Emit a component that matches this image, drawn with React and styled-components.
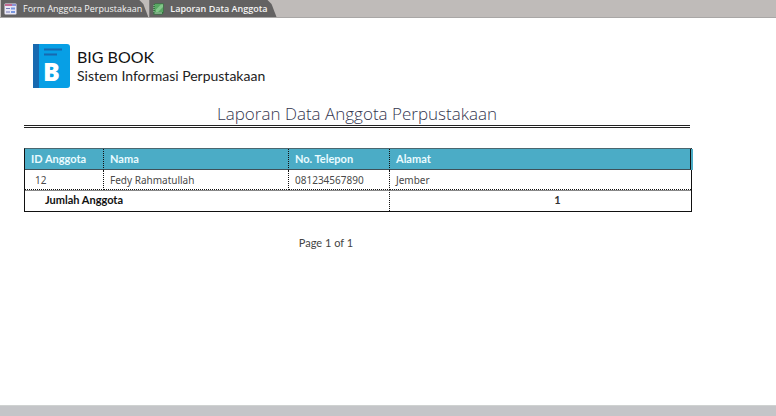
import React from "react";
import styled, { createGlobalStyle } from "styled-components";

const GlobalStyle = createGlobalStyle`
  *, *::before, *::after { box-sizing: border-box; }
  body { margin: 0; background: #fff; font-family: Lato, "Open Sans", sans-serif; }
`;

const Window = styled.div`
  display: flex;
  flex-direction: column;
  min-height: 100vh;
`;

const TabBar = styled.div`
  display: flex;
  height: 18px;
  padding-left: 1px;
  background: #bfbbb9;
  border-bottom: 1px solid #a9a7a6;
`;

const Tab = styled.button`
  display: flex;
  align-items: center;
  gap: ${(p) => (p.$active ? 5 : 6)}px;
  height: 17px;
  padding: 0 ${(p) => (p.$active ? 9 : 6)}px 0 3px;
  margin-right: 1px;
  border: 0;
  background: #636262;
  clip-path: polygon(0 0, calc(100% - 9px) 0, calc(100% - 5px) 4px, 100% 100%, 0 100%);
  color: #f4f4f4;
  font-family: "Open Sans", "Noto Sans", sans-serif;
  font-size: 9px;
  font-weight: ${(p) => (p.$active ? 600 : 400)};
  line-height: 16px;
  white-space: nowrap;
`;

const Report = styled.main`
  flex: 1;
  padding: 25px 84px 16px 24px;
`;

const Brand = styled.header`
  display: flex;
  align-items: center;
  gap: 6px;
  padding-left: 8px;
`;

const BrandName = styled.div`
  color: #111;
  font-size: 16px;
  line-height: 20px;
`;

const BrandText = styled.div`
  color: #222;
  font-size: 14px;
  line-height: 18px;
`;

const Title = styled.h1`
  margin: 15px 2px 20px 0;
  padding-bottom: 1px;
  border-bottom: 3px double #222;
  color: #34364f;
  font-family: "Open Sans", "Noto Sans", sans-serif;
  font-size: 17px;
  font-weight: 300;
  line-height: 20px;
  text-align: center;
`;

const Table = styled.table`
  width: 100%;
  table-layout: fixed;
  border-collapse: separate;
  border-spacing: 0;
  border: 1px solid #111;
  border-top-color: #4a6770;
  font-size: 11px;
  line-height: 14px;
`;

const Col = styled.col`
  width: ${(p) => p.$width};
`;

const HeadRow = styled.tr`
  background: #4bacc6;
  box-shadow: 2px 0 #4bacc6;
`;

const HeadCell = styled.th`
  height: 21px;
  padding: 0 6px;
  border-bottom: 1px solid #3f5058;
  border-right: ${(p) => (p.$last ? "1px solid #111" : "1px dotted #111")};
  color: #e9fbff;
  font-weight: 700;
  text-align: left;
`;

const Cell = styled.td`
  height: 20px;
  padding: 0 6px 0 ${(p) => p.$indent || 6}px;
  border-right: ${(p) => (p.$last ? "0" : "1px dotted #111")};
  border-bottom: 1px dotted #111;
  color: #4a4a4a;
  font-family: "Noto Sans", "Open Sans", sans-serif;
  font-size: 10px;
`;

const TotalCell = styled.td`
  height: 21px;
  padding: 0 6px 2px ${(p) => p.$indent}px;
  border-top: 1px solid #888;
  border-right: ${(p) => (p.$last ? "0" : "1px dotted #111")};
  color: ${(p) => (p.$last ? "#333" : "#111")};
  font-weight: 700;
  text-align: ${(p) => (p.$last ? "center" : "left")};
`;

const PageNumber = styled.p`
  margin: 23px 64px 0 0;
  color: #444;
  font-size: 11px;
  line-height: 16px;
  text-align: center;
`;

const StatusBar = styled.footer`
  height: 11px;
  background: #c4c5c8;
  border-top: 1px solid #cfd2d1;
`;

const FormIcon = () => (
  <svg width="13" height="12" viewBox="0 0 13 12" aria-hidden="true">
    <rect x="0.5" y="0.5" width="12" height="11" rx="1" fill="#e9e7f5" />
    <path d="M1 2H8" stroke="#c46a93" strokeWidth="2" />
    <path d="M8 2H12" stroke="#8b93d8" strokeWidth="2" />
    <rect x="2" y="5" width="4" height="1" fill="#7379b5" />
    <rect x="7" y="4.5" width="4" height="2" fill="#7897df" />
    <rect x="2" y="8.5" width="4" height="1" fill="#7379b5" />
    <rect x="7" y="8" width="4" height="2" fill="#7897df" />
  </svg>
);

const ReportIcon = () => (
  <svg width="13" height="12" viewBox="0 0 13 12" aria-hidden="true">
    <path d="M1.5 2L3 0.5H11.5V9.5L10 11.5H1.5Z" fill="#2f7a3d" />
    <path d="M3 1H11V9H3Z" fill="#58a863" />
    <path d="M4 6.5L9 1.5H11V4L6 9H4Z" fill="#83c78a" />
    <path d="M2.5 10H10" stroke="#c9dfc9" />
    <path d="M2 2V10" stroke="#b5d6b8" strokeDasharray="1 1" />
  </svg>
);

const BookLogo = () => (
  <svg width="39" height="46" viewBox="0 0 39 46" aria-hidden="true">
    <path d="M1 1H35Q38 1 38 4V42Q38 45 35 45H1Z" fill="#079fe5" />
    <path d="M1 1H7V45H1Z" fill="#1769b0" />
    <path d="M12 6.5H30M12 11.5H25" stroke="#1769b0" strokeWidth="2" />
    <text x="19.5" y="38" textAnchor="middle" fill="#fff" fontFamily="Open Sans, sans-serif" fontSize="25" fontWeight="800">
      B
    </text>
  </svg>
);

const columns = ["ID Anggota", "Nama", "No. Telepon", "Alamat"];
const members = [{ id: "12", name: "Fedy Rahmatullah", phone: "081234567890", address: "Jember" }];

export default function App() {
  return (
    <Window>
      <GlobalStyle />
      <TabBar role="tablist">
        <Tab type="button" role="tab" aria-selected="false">
          <FormIcon />
          Form Anggota Perpustakaan
        </Tab>
        <Tab type="button" role="tab" aria-selected="true" $active>
          <ReportIcon />
          Laporan Data Anggota
        </Tab>
      </TabBar>
      <Report>
        <Brand>
          <BookLogo />
          <div>
            <BrandName>BIG BOOK</BrandName>
            <BrandText>Sistem Informasi Perpustakaan</BrandText>
          </div>
        </Brand>
        <Title>Laporan Data Anggota Perpustakaan</Title>
        <Table>
          <colgroup>
            <Col $width="79px" />
            <Col $width="185px" />
            <Col $width="101px" />
            <Col $width="auto" />
          </colgroup>
          <thead>
            <HeadRow>
              {columns.map((label, i) => (
                <HeadCell key={label} scope="col" $last={i === columns.length - 1}>
                  {label}
                </HeadCell>
              ))}
            </HeadRow>
          </thead>
          <tbody>
            {members.map((m) => (
              <tr key={m.id}>
                <Cell $indent={10}>{m.id}</Cell>
                <Cell>{m.name}</Cell>
                <Cell>{m.phone}</Cell>
                <Cell $last>{m.address}</Cell>
              </tr>
            ))}
          </tbody>
          <tfoot>
            <tr>
              <TotalCell colSpan={3} $indent={20}>
                Jumlah Anggota
              </TotalCell>
              <TotalCell $last $indent={40}>
                1
              </TotalCell>
            </tr>
          </tfoot>
        </Table>
        <PageNumber>Page 1 of 1</PageNumber>
      </Report>
      <StatusBar />
    </Window>
  );
}
